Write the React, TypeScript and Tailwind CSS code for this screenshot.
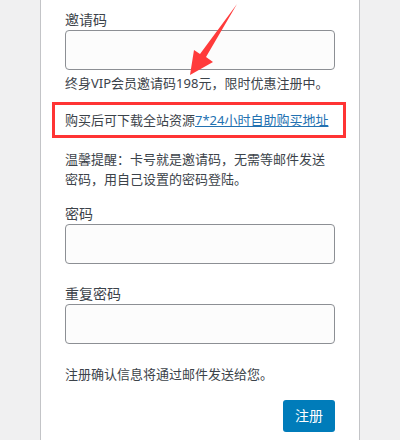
import React from 'react';

const font = { fontFamily: '"Noto Sans", "Noto Sans CJK SC", sans-serif' };

const Field: React.FC<{ label: string; className?: string }> = ({ label, className }) => (
  <div className={className}>
    <label className="block text-[14px] leading-[21px] text-[#3c434a]">{label}</label>
    <input
      type="text"
      className="block w-full h-10 rounded-[4px] border border-[#8c8f94] bg-[#fcfcfc] px-2 outline-none"
    />
  </div>
);

const App: React.FC = () => {
  return (
    <div className="relative w-[400px] h-[440px] overflow-hidden bg-[#f0f0f1]" style={font}>
      {/* Form card */}
      <div className="ml-10 w-[320px] h-[460px] bg-white border-x border-[#c3c4c7] px-6 pt-[9px]">
        <Field label="邀请码" />
        <p className="mt-[3px] text-[13px] leading-5 text-[#3c434a]">终身VIP会员邀请码198元，限时优惠注册中。</p>

        <div className="mt-[9px] ml-[-13px] mr-[-11px] border-[3px] border-[#ff3434] py-[5px] pl-[10px] text-[13px] leading-5 text-[#3c434a]">
          购买后可下载全站资源
          <a href="#" className="text-[#2271b1] underline">7*24小时自助购买地址</a>
        </div>

        <p className="mt-[11px] text-[13px] leading-5 text-[#3c434a]">
          温馨提醒：卡号就是邀请码，无需等邮件发送密码，用自己设置的密码登陆。
        </p>

        <Field label="密码" className="mt-[14px]" />
        <Field label="重复密码" className="mt-[19px]" />

        <p className="mt-5 text-[13px] leading-5 text-[#3c434a]">注册确认信息将通过邮件发送给您。</p>

        <div className="mt-4 flex justify-end">
          <button className="h-8 px-3 rounded-[3px] bg-[#007cba] text-white text-[14px] leading-8">注册</button>
        </div>
      </div>

      {/* Annotation arrow */}
      <svg className="absolute left-0 top-0 pointer-events-none" width="400" height="440" viewBox="0 0 400 440">
        <polygon points="237,4 206,57 213,62 190,75 194,50 200,54" fill="#ff3b3b" />
      </svg>
    </div>
  );
};

export default App;
